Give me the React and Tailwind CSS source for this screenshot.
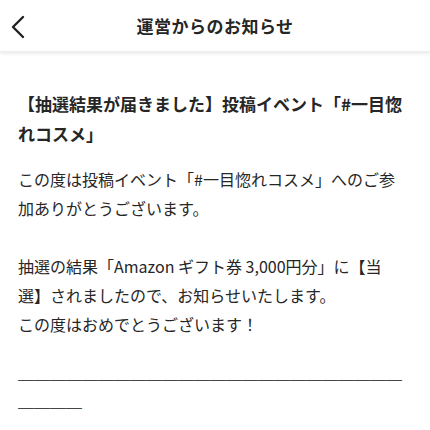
export default function App() {
  return (
    <div className="w-[430px] h-[430px] overflow-hidden bg-white text-[#262626]" style={{ fontFamily: '"Noto Sans CJK JP", "Noto Sans", sans-serif' }}>
      <header className="relative h-[52px] flex items-center justify-center shadow-[0_2px_3px_rgba(0,0,0,0.08)] border-b border-[#eeeeee]">
        <svg className="absolute left-[9px] top-[15px]" width="18" height="24" viewBox="0 0 18 24" fill="none">
          <path d="M14 2 L4 12 L14 22" stroke="#222" strokeWidth="2.4" strokeLinecap="round" strokeLinejoin="round" />
        </svg>
        <h1 className="text-[17px] font-bold leading-none tracking-[0.5px]">運営からのお知らせ</h1>
      </header>
      <main className="pl-[18px] pr-[28px] pt-[37px]">
        <h2 className="w-[392px] text-[17px] font-bold leading-[30px]">【抽選結果が届きました】投稿イベント「#一目惚れコスメ」</h2>
        <div className="mt-[16px] text-[16px] leading-[29px]">
          <p>この度は投稿イベント「#一目惚れコスメ」へのご参加ありがとうございます。</p>
          <p>&nbsp;</p>
          <p>抽選の結果「Amazon ギフト券 3,000円分」に【当選】されましたので、お知らせいたします。</p>
          <p>この度はおめでとうございます！</p>
          <p>&nbsp;</p>
          <p className="break-all -mt-[10px] leading-[28px] w-[390px] font-bold text-[#111]">＿＿＿＿＿＿＿＿＿＿＿＿＿＿＿＿＿＿＿＿＿＿＿＿＿＿＿＿</p>
        </div>
      </main>
    </div>
  );
}
